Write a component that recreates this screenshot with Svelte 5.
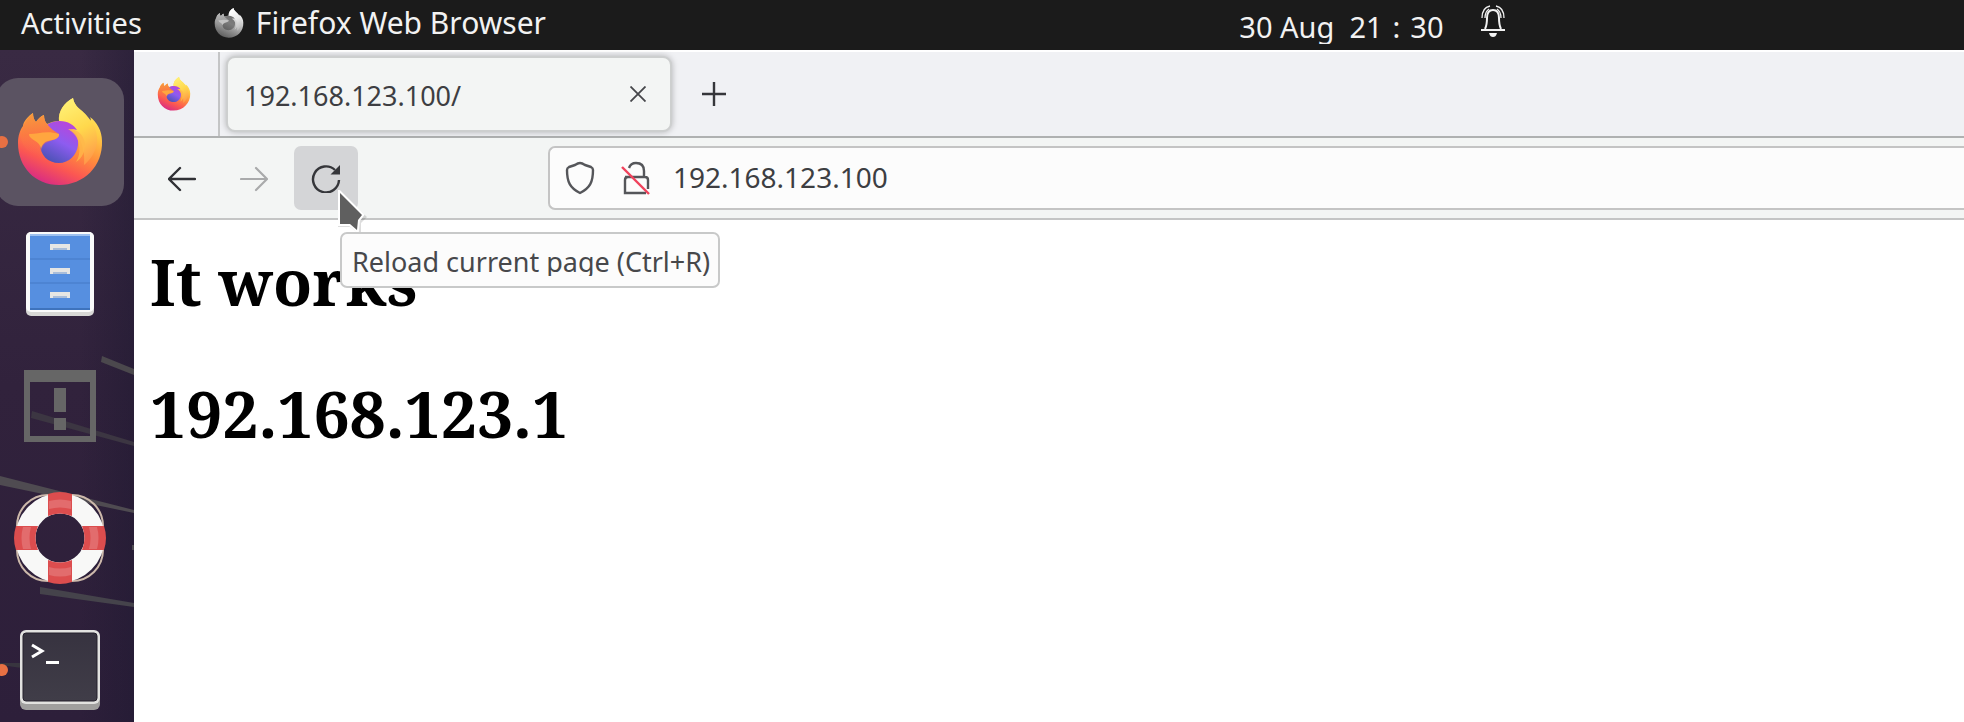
<script>
  let address = $state('192.168.123.100');
</script>

{#snippet firefox(id, size)}
  <svg class="icon" width={size} height={size} viewBox="-2 0 88 88" aria-hidden="true">
    <defs>
      <linearGradient id="{id}-body" x1="0.8" y1="0" x2="0.35" y2="1">
        <stop offset="0" stop-color="#fff36a" />
        <stop offset="0.3" stop-color="#ffcb45" />
        <stop offset="0.55" stop-color="#ff8f3c" />
        <stop offset="0.78" stop-color="#fb5752" />
        <stop offset="1" stop-color="#d92c83" />
      </linearGradient>
      <linearGradient id="{id}-tail" x1="0.3" y1="0" x2="0.6" y2="1">
        <stop offset="0" stop-color="#fff176" />
        <stop offset="0.5" stop-color="#ffd84c" />
        <stop offset="1" stop-color="#ff9a4a" />
      </linearGradient>
      <linearGradient id="{id}-globe" x1="0.8" y1="0" x2="0.3" y2="1">
        <stop offset="0" stop-color="#bd43d8" />
        <stop offset="0.5" stop-color="#8d5cf0" />
        <stop offset="1" stop-color="#4a52b4" />
      </linearGradient>
      <linearGradient id="{id}-head" x1="0.4" y1="0" x2="0.5" y2="1">
        <stop offset="0" stop-color="#f79a3d" />
        <stop offset="0.5" stop-color="#fb7a42" />
        <stop offset="1" stop-color="#ff5d55" stop-opacity="0" />
      </linearGradient>
    </defs>
    <path fill="url(#{id}-body)" d="M15 15c0 4 1 7 3 9 2-3 5-6 8-7 0 4 1 7 3 9 4-2 8-3 12-3-1-10 5-18 14-23 1 6 5 10 9 13 4 4 6 6 8 10 1-1 1-2 0-4 7 5 12 14 12 24 1 25-18 44-43 44C17 87 0 69 0 45 0 38 2 32 5 28c0-4 5-10 10-13Z" />
    <path fill="url(#{id}-tail)" d="M41 24C40 13 46 5 55 0c1 6 5 10 9 13 9 8 16 18 15 31-1 10-7 18-13 23 1-10-1-22-7-31-5-7-11-10-18-12Z" />
    <path fill="url(#{id}-globe)" d="M29 27c4-3 8-4 13-4 8 0 14 4 17 9-3-1-5-1-7 0 6 3 9 8 8 15-1 10-9 18-19 18-11 0-19-8-19-19 0-7 2-14 7-19Z" />
    <path fill="url(#{id}-head)" d="M15 15c0 4 1 7 3 9 2-3 5-6 8-7 0 4 1 7 3 9 3 4 7 7 12 10 0 5-7 6-11 8-5 2-7 6-6 11C18 60 4 52 3 39c0-8 5-19 12-24Z" />
    <path fill="#ffa63f" d="M11 36c9 0 18-4 30 0 1 4-5 6-11 7-4 1-6 4-7 8-1-7-7-8-10-11-1-1-2-2-2-4Z" />
    <path fill="#ffb84a" opacity="0.8" d="M50 31c9-1 16 6 17 15 0 8-3 14-9 18 3-5 4-10 3-17-1-8-5-12-11-16Z" />
  </svg>
{/snippet}

<div class="desktop">
  <header class="panel">
    <button class="activities">Activities</button>
    <button class="app-menu">
      <span class="mono">{@render firefox('menu', 30)}</span>
      <span>Firefox Web Browser</span>
    </button>
    <button class="clock">
      <span class="date">30 Aug&nbsp; 21<span class="colon">:</span>30</span>
      <svg width="26" height="34" viewBox="0 0 26 34" fill="none" stroke="#f2f2f2" stroke-width="2" aria-hidden="true">
        <path d="M5 25c2-4 2-7 2-11 0-5 2-8 6-8s6 3 6 8c0 4 0 7 2 11" />
        <path d="M1 26h24" stroke-width="2" />
        <path d="M2 14C2 7 5 3 10 2M24 14c0-7-3-11-8-12M5 14c0-4 1-7 4-9M21 14c0-4-1-7-4-9" stroke-width="1.3" />
        <path d="M9 29h8c-1 3-2 4-4 4s-3-1-4-4Z" fill="#f2f2f2" stroke="none" />
      </svg>
    </button>
  </header>

  <div class="workspace">
    <nav class="dock" aria-label="Dock">
      <svg class="wallpaper" width="134" height="672" viewBox="0 50 134 672" aria-hidden="true">
        <path d="M102 356 134 369v6l-33-13Z" fill="#4b484d" />
        <path d="M32 411 134 442v4L31 418Z" fill="#3c3642" />
        <path d="M0 476 134 510v3L0 485Z" fill="#4f4b51" />
        <path d="M40 587 134 603v4L40 594Z" fill="#45434b" />
        <path d="M0 663h22v5L0 665Z" fill="#38353f" />
        <path d="M132 545h2v5h-2Z" fill="#4f4b51" />
      </svg>
      <button class="tile active running" aria-label="Firefox Web Browser">{@render firefox('dock', 88)}</button>
      <button class="tile" aria-label="Files">
        <svg width="68" height="84" viewBox="0 0 68 84" aria-hidden="true">
          <rect width="68" height="84" rx="5" fill="#d8d8d6" />
          <rect width="68" height="80" rx="5" fill="#fafafa" />
          <path d="M4 4h60v74H4z" fill="#568fe0" />
          <path d="M4 2h60v2H4z" fill="#9fc1ef" />
          <path d="M4 26h60v2H4zM4 50h60v2H4z" fill="#4d84d3" />
          <path d="M4 76h60v2H4z" fill="#3e73bd" />
          {#each [12, 36, 60] as y}
            <path d="M24 {y + 6}v-6h20v6h-3v-2H27v2Z" fill="#e6e6e4" />
            <path d="M27 {y + 4}h14v2H27z" fill="#a9bdd9" />
          {/each}
        </svg>
      </button>
      <button class="tile" aria-label="Unknown application">
        <svg width="72" height="72" viewBox="0 0 72 72" fill="#666" aria-hidden="true">
          <path fill-rule="evenodd" d="M0 0h72v72H0zM6 12v54h60V12Z" />
          <path d="M30 18h12v24H30zM30 48h12v12H30z" />
        </svg>
      </button>
      <button class="tile" aria-label="Help">
        <svg width="92" height="92" viewBox="0 0 92 92" fill="none" aria-hidden="true">
          <rect x="3" y="3" width="86" height="86" rx="31" stroke="#cdb9ab" stroke-width="2" />
          <circle cx="46" cy="46" r="34.5" stroke="#f8f8f7" stroke-width="20" />
          <path d="M34 2q12-4 24 0v22q-12-5-24 0ZM34 90q12 4 24 0V68q-12 5-24 0ZM2 34q-4 12 0 24h22q-5-12 0-24ZM90 34q4 12 0 24H68q5-12 0-24Z" fill="#dc4d4e" />
          <path d="M35 9q11-3 22 0v8q-11-3-22 0ZM35 83q11 3 22 0v-8q-11 3-22 0ZM9 35q-3 11 0 22h8q-3-11 0-22ZM83 35q3 11 0 22h-8q3-11 0-22Z" fill="#e26c6d" />
        </svg>
      </button>
      <button class="tile running" aria-label="Terminal">
        <svg width="80" height="80" viewBox="0 0 80 80" aria-hidden="true">
          <defs>
            <linearGradient id="screen" x1="0" y1="0" x2="0" y2="1">
              <stop offset="0" stop-color="#373340" />
              <stop offset="1" stop-color="#403d48" />
            </linearGradient>
          </defs>
          <rect y="8" width="80" height="72" rx="6" fill="#a09f9e" />
          <rect width="80" height="74" rx="6" fill="#e2e2e0" />
          <rect x="3" y="3" width="74" height="68" rx="3" fill="url(#screen)" stroke="#24212c" stroke-width="1" />
          <path d="m12 15 10 6-10 6" fill="none" stroke="#fff" stroke-width="3" />
          <path d="M26 31h13v3H26z" fill="#fff" />
        </svg>
      </button>
    </nav>

    <main class="browser">
      <div class="tab-strip">
        <button class="pinned" aria-label="Firefox View">{@render firefox('pin', 34)}</button>
        <div class="tab">
          <span class="tab-title">192.168.123.100/</span>
          <button class="close" aria-label="Close tab">
            <svg width="16" height="16" viewBox="0 0 16 16" stroke="#45464a" stroke-width="1.8" aria-hidden="true"><path d="m0.5 0.5 15 15M15.5 0.5l-15 15" /></svg>
          </button>
        </div>
        <button class="new-tab" aria-label="New tab">
          <svg width="24" height="24" viewBox="0 0 24 24" stroke="#35363a" stroke-width="2.4" aria-hidden="true"><path d="M12 0v24M0 12h24" /></svg>
        </button>
      </div>

      <div class="toolbar">
        <button class="tool" aria-label="Back">
          <svg width="28" height="28" viewBox="0 0 28 28" fill="none" stroke="#303135" stroke-width="2.4" stroke-linecap="round" aria-hidden="true"><path d="M27 15H1M12 4 1 15l11 11" /></svg>
        </button>
        <button class="tool" aria-label="Forward" disabled>
          <svg width="28" height="28" viewBox="0 0 28 28" fill="none" stroke="#a9aaab" stroke-width="2.2" stroke-linecap="round" aria-hidden="true"><path d="M1 15h26M16 4l11 11-11 11" /></svg>
        </button>
        <div class="reload">
          <button class="tool hovered" aria-label="Reload current page">
            <svg width="30" height="30" viewBox="0 0 30 30" fill="none" stroke="#35363a" stroke-width="2.4" aria-hidden="true">
              <path d="M28 17A13 13 0 1 1 24 7" />
              <path d="M29 2v9.500h-9.500Z" fill="#35363a" stroke="none" />
            </svg>
          </button>
          <svg class="pointer" width="32" height="46" viewBox="0 0 32 46" aria-hidden="true">
            <path d="M1 0 30 27l-6 6v12l-11-8H1Z" fill="#0002" />
            <path d="M3 3 25 25l-4 5-1 10-7-6H3Z" fill="#fff" stroke="#fff" stroke-width="4" />
            <path d="M3 3 25 25l-4 5-1 10-7-6H3Z" fill="#5f5f5f" />
          </svg>
          <div class="tooltip" role="tooltip"><span>Reload current page (Ctrl+R)</span></div>
        </div>
        <div class="url-bar">
          <svg width="30" height="34" viewBox="0 0 30 34" fill="none" stroke="#55565a" stroke-width="2.4" stroke-linejoin="round" aria-hidden="true">
            <path d="M15 2q2 0 5 2l6 2q2 1 2 3c0 12-3 18-13 23C5 27 2 21 2 9q0-2 2-3l6-2q3-2 5-2Z" />
          </svg>
          <svg width="30" height="34" viewBox="0 0 30 34" fill="none" aria-hidden="true">
            <path d="M8 7c1-3 4-5 7-5 5 0 8 3 8 8v6M4 16h20q3 0 3 3v9M11 16H7q-3 0-3 3v13h21" stroke="#55565a" stroke-width="2.4" />
            <path d="m1 6 27 27" stroke="#f0425c" stroke-width="2.4" />
          </svg>
          <input aria-label="Address" bind:value={address} spellcheck="false" />
        </div>
      </div>

      <article class="page">
        <h1>It works</h1>
        <h1>192.168.123.1</h1>
      </article>
    </main>
  </div>
</div>

<style>
  :global(body) {
    margin: 0;
    overflow: hidden;
  }

  .desktop {
    display: flex;
    flex-direction: column;
    height: 100vh;
    overflow: hidden;
    background: #fff;
    font-family: "Noto Sans", sans-serif;
  }

  button {
    display: flex;
    align-items: center;
    justify-content: center;
    margin: 0;
    padding: 0;
    border: 0;
    background: none;
    color: inherit;
    font: inherit;
  }

  svg {
    display: block;
    flex: none;
  }

  .panel {
    position: relative;
    display: flex;
    flex: none;
    align-items: center;
    height: 50px;
    padding: 0 21px 4px;
    box-sizing: border-box;
    gap: 72px;
    background: #1b1b1b;
    color: #f2f2f2;
    font-size: 29px;
    line-height: 38px;
  }

  .app-menu {
    gap: 12px;
    font-size: 30px;
  }

  .mono {
    filter: grayscale(1) brightness(1.1);
  }

  .clock {
    position: absolute;
    left: 63%;
    top: 4px;
    align-items: flex-start;
    gap: 36px;
    padding-left: 2px;
  }

  .date {
    height: 40px;
    padding-top: 4px;
    box-sizing: border-box;
    overflow: hidden;
    white-space: nowrap;
  }

  .colon {
    padding: 0 10px;
  }

  .workspace {
    display: flex;
    flex: 1;
    min-height: 0;
  }

  .dock {
    position: relative;
    display: flex;
    flex: none;
    flex-direction: column;
    gap: 4px;
    width: 134px;
    padding-top: 28px;
    box-sizing: border-box;
    overflow: hidden;
    background:
      linear-gradient(90deg, transparent 60%, #1d183070),
      linear-gradient(#392a43, #31223c 50%, #2d1f3a);
  }

  .wallpaper {
    position: absolute;
    left: 0;
    top: 0;
  }

  .tile {
    position: relative;
    flex: none;
    width: 128px;
    height: 128px;
    margin-left: -4px;
    border-radius: 22px;
  }

  .active {
    background: #5b5362;
  }

  .running::before {
    position: absolute;
    left: 0;
    width: 12px;
    height: 12px;
    border-radius: 50%;
    background: #e77043;
    content: "";
  }

  .browser {
    display: flex;
    flex: 1;
    flex-direction: column;
    min-width: 0;
    background: #fff;
  }

  .tab-strip {
    display: flex;
    flex: none;
    align-items: center;
    height: 88px;
    box-sizing: border-box;
    border-top: 2px solid #fff;
    border-bottom: 2px solid #afb1b1;
    background: #f0f1f4;
  }

  .pinned {
    width: 86px;
    height: 100%;
    padding-right: 4px;
    box-sizing: border-box;
    border-right: 2px solid #c4c5c6;
  }

  .tab {
    display: flex;
    align-items: center;
    justify-content: space-between;
    width: 446px;
    height: 76px;
    margin: 0 30px 0 6px;
    padding: 0 24px 0 16px;
    box-sizing: border-box;
    border: 2px solid #cdcfcf;
    border-radius: 9px;
    background: #f3f5f4;
    box-shadow: 0 0 6px #0004;
    color: #3d3e42;
    font-size: 27px;
    line-height: 36px;
  }

  .tab-title {
    padding-top: 4px;
  }

  .toolbar {
    display: flex;
    flex: none;
    align-items: center;
    gap: 8px;
    height: 82px;
    padding-left: 16px;
    box-sizing: border-box;
    border-bottom: 2px solid #c4c5c5;
    background: #f3f5f4;
  }

  .tool {
    width: 64px;
    height: 64px;
    border-radius: 7px;
  }

  .hovered {
    background: #d4d5d7;
  }

  .reload {
    position: relative;
    margin-right: 182px;
  }

  .pointer {
    position: absolute;
    left: 43px;
    top: 44px;
    z-index: 2;
  }

  .tooltip {
    position: absolute;
    left: 46px;
    top: 86px;
    z-index: 3;
    padding: 10px 8px 10px 10px;
    border: 2px solid #c8c9c9;
    border-radius: 7px;
    background: #fcfcfc;
    color: #47484b;
    font-size: 27px;
    line-height: 36px;
    white-space: nowrap;
  }

  .tooltip span {
    display: block;
    height: 32px;
    overflow: hidden;
  }

  .url-bar {
    display: flex;
    flex: 1;
    align-items: center;
    gap: 26px;
    min-width: 0;
    height: 64px;
    padding-left: 15px;
    box-sizing: border-box;
    border: 2px solid #c4c4c4;
    border-right: 0;
    border-radius: 7px 0 0 7px;
    background: #fcfcfc;
  }

  input {
    flex: 1;
    min-width: 0;
    margin-left: -4px;
    padding: 0 0 2px;
    border: 0;
    outline: 0;
    background: transparent;
    color: #3d3e42;
    font: 28px/38px "Noto Sans", sans-serif;
  }

  .page {
    padding: 18px 16px;
    color: #000;
    font-family: "Noto Serif", "Droid Serif", "Liberation Serif", serif;
  }

  h1 {
    margin: 0 0 44px;
    font-size: 64px;
    font-weight: 700;
    line-height: 88px;
  }
</style>
